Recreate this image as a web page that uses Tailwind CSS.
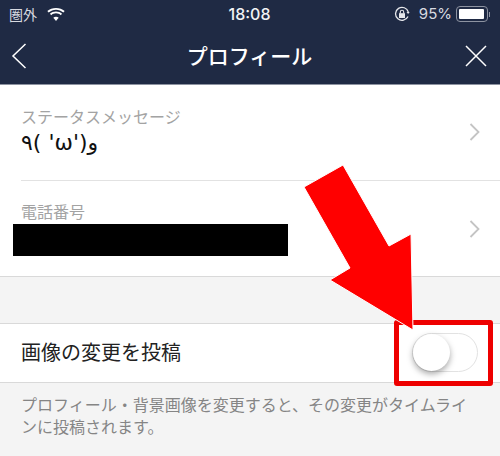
<!DOCTYPE html>
<html lang="ja">
<head>
    <meta charset="UTF-8">
    <title>プロフィール</title>
    <script src="https://cdn.jsdelivr.net/npm/@tailwindcss/browser@4"></script>
</head>
<body class="relative w-[500px] h-[456px] overflow-hidden bg-[#f4f4f4] font-['Noto_Sans_CJK_JP','Noto_Sans',sans-serif]">
    <!-- Status bar + title bar -->
    <header class="h-[85px] bg-[#1f2a44] border-b border-[#8d93a1] text-white">
        <div class="h-[28px] flex items-center justify-between pl-[9px] pr-[10px]">
            <div class="w-[170px] flex items-center gap-[10px] text-[14px] text-[#d8dae0]">
                <span>圏外</span>
                <svg class="w-[18px] h-[13px]" viewBox="0 0 20 15" fill="#fff">
                    <path d="M10 2c3.200 0 6.200 1.200 8.500 3.300l1.500-1.700C17.300 1.100 13.800 0 10 0S2.700 1.100 0 3.600l1.500 1.700C3.800 3.200 6.800 2 10 2z"/>
                    <path d="M10 6.200c2.100 0 4 .8 5.500 2.100l1.500-1.700C15.100 5 12.700 4 10 4S4.900 5 3 6.600l1.500 1.700C6 7 7.900 6.200 10 6.200z"/>
                    <path d="M10 10c-1.200 0-2.300.4-3.100 1.200L10 15l3.100-3.800C12.300 10.400 11.200 10 10 10z"/>
                </svg>
            </div>
            <span class="text-[16px] font-['Inter',sans-serif] font-medium text-[#f2f3f5]">18:08</span>
            <div class="w-[170px] flex items-center justify-end gap-[9px]">
                <svg class="w-[16px] h-[16px]" viewBox="0 0 16 16" fill="none" stroke="#e6e7eb">
                    <path stroke-width="1.300" d="M14 10.500A6.500 6.500 0 1 1 14.300 6"/>
                    <path d="M12.500 6h3.200l-1.600 2z" fill="#e6e7eb" stroke="none"/>
                    <rect x="5" y="7.200" width="6" height="4.800" fill="#e6e7eb" stroke="none"/>
                    <path stroke-width="1.100" d="M6.300 7.500V6a1.700 1.700 0 0 1 3.400 0v1.500"/>
                </svg>
                <div class="flex items-center gap-[3px]">
                    <span class="text-[15px] font-['Inter',sans-serif] text-[#d8dae0]">95%</span>
                    <div class="w-[32px] h-[16px] rounded-[4px] border border-[#8d93a1] p-[2px] ml-[1px]">
                        <div class="w-[25px] h-full rounded-[1px] bg-white"></div>
                    </div>
                    <div class="w-[1px] h-[5px] bg-[#8d93a1] -ml-[2px]"></div>
                </div>
            </div>
        </div>
        <div class="h-[56px] flex items-center justify-between pl-[11px] pr-[13px]">
            <svg class="w-[16px] h-[26px]" viewBox="0 0 16 26" fill="none" stroke="#fff" stroke-width="1.500">
                <path d="M14.500 1L2 13l12.500 12"/>
            </svg>
            <h1 class="text-[21px] font-medium leading-none -mt-[1px] ml-[7px]">プロフィール</h1>
            <svg class="w-[22px] h-[22px]" viewBox="0 0 22 22" fill="none" stroke="#fff" stroke-width="1.500">
                <path d="M1 1l20 20M21 1L1 21"/>
            </svg>
        </div>
    </header>

    <!-- Profile rows -->
    <section class="bg-white border-b border-[#d9d9d9]">
        <div class="h-[96px] ml-[21px] pr-[20px] border-b border-[#e2e2e2] flex items-center justify-between">
            <div class="-mt-[4px]">
                <p class="text-[16px] leading-[22px] text-[#a3a3a3]">ステータスメッセージ</p>
                <p class="mt-[3px] text-[22px] leading-[26px] text-[#111] font-['DejaVu_Sans',sans-serif]">٩( 'ω')و</p>
            </div>
            <svg class="w-[11px] h-[18px] -mt-[2px]" viewBox="0 0 11 18" fill="none" stroke="#c4c4c4" stroke-width="1.800">
                <path d="M1.500 1l8 8-8 8"/>
            </svg>
        </div>
        <div class="h-[95px] ml-[21px] pr-[20px] flex items-center justify-between">
            <div class="-mt-[1px]">
                <p class="text-[16px] leading-[22px] text-[#a3a3a3]">電話番号</p>
                <div class="mt-[2px] w-[275px] h-[32px] bg-black -ml-[8px]"></div>
            </div>
            <svg class="w-[11px] h-[18px]" viewBox="0 0 11 18" fill="none" stroke="#c4c4c4" stroke-width="1.800">
                <path d="M1.500 1l8 8-8 8"/>
            </svg>
        </div>
    </section>

    <!-- Toggle row -->
    <section class="mt-[46px] h-[60px] bg-white border-y border-[#d9d9d9] pl-[21px] pr-[22px] flex items-center justify-between">
        <p class="text-[20px] -mt-[2px] text-[#222]">画像の変更を投稿</p>
        <div class="w-[66px] h-[39px] rounded-full border border-[#e2e2e2] bg-white -mt-[1px]">
            <div class="w-[37px] h-[37px] rounded-full bg-white shadow-[0_3px_6px_rgba(0,0,0,0.35)]"></div>
        </div>
    </section>
    <p class="pl-[21px] pt-[10px] text-[16px] leading-[22px] whitespace-nowrap text-[#858585]">プロフィール・背景画像を変更すると、その変更がタイムライ<br>ンに投稿されます。</p>

    <!-- Annotations on top of the screenshot -->
    <div class="absolute left-[394px] top-[320px] w-[99px] h-[66px] border-[5px] border-[#ee0000] rounded-[3px]"></div>
    <svg class="absolute left-0 top-0 w-[500px] h-[456px]" viewBox="0 0 500 456">
        <path d="M304 187L343 165L389 246L411 234L413 330L330 280L350 268Z" fill="#ff0000" stroke="#fff" stroke-width="1"/>
    </svg>
</body>
</html>
